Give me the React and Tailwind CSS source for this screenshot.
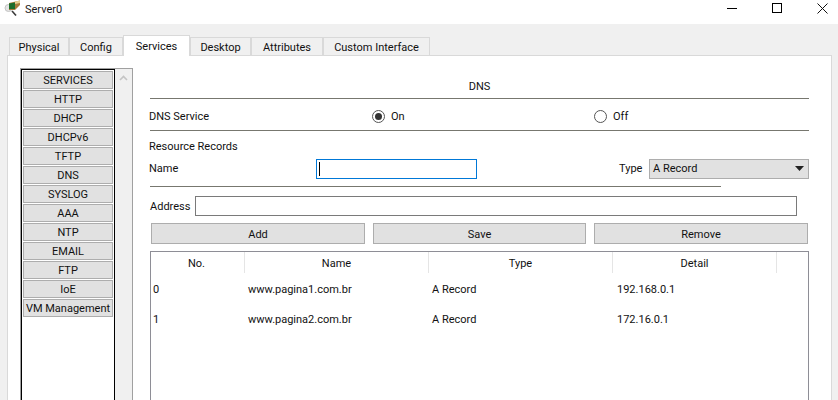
const tabs = [
  { label: 'Physical', w: 'w-[60px]' },
  { label: 'Config', w: 'w-[54px]' },
  { label: 'Services', w: 'w-[67px]', active: true },
  { label: 'Desktop', w: 'w-[61px]' },
  { label: 'Attributes', w: 'w-[72px]' },
  { label: 'Custom Interface', w: 'w-[107px]' },
]

const services = ['SERVICES', 'HTTP', 'DHCP', 'DHCPv6', 'TFTP', 'DNS', 'SYSLOG', 'AAA', 'NTP', 'EMAIL', 'FTP', 'IoE', 'VM Management']

const records = [
  { no: '0', name: 'www.pagina1.com.br', type: 'A Record', detail: '192.168.0.1' },
  { no: '1', name: 'www.pagina2.com.br', type: 'A Record', detail: '172.16.0.1' },
]

const TitleBar = () => (
  <div className="h-6 bg-white flex items-center justify-between pr-[10px]">
    <div className="flex items-center pl-[4px] gap-[5px]">
      <svg width="16" height="16" viewBox="0 0 16 16" className="relative top-[-4px]">
        <circle cx="4.5" cy="8" r="3.5" fill="#e4e4e4" stroke="#c4c4c4" />
        <path d="M8 11l4 4.5" stroke="#3a3a3a" strokeWidth="1.6" />
        <path d="M5 3l11-2.5V5l-5 5H5z" fill="#a97c3a" />
        <path d="M5 3.5l6-1V9H5z" fill="#1d6e2a" />
        <path d="M11 1.5l5-1V3l-5 1z" fill="#e6cf8e" />
      </svg>
      <span className="text-[11px] text-[#1a1a1a] relative top-[-2px]">Server0</span>
    </div>
    <div className="flex items-center gap-[35px]">
      <div className="w-[10px] h-px bg-black relative top-[-4px]" />
      <div className="w-[10px] h-[10px] border border-black relative top-[-4px]" />
      <svg width="11" height="11" viewBox="0 0 11 11" className="relative top-[-4px]">
        <path d="M.5.5l10 10M10.5.5l-10 10" stroke="#111" />
      </svg>
    </div>
  </div>
)

const Tabs = () => (
  <div className="flex h-[31px] pl-[9px] items-end">
    {tabs.map((t) =>
      t.active ? (
        <div key={t.label} className={`${t.w} h-[21px] pt-[2px] bg-white border border-b-0 border-[#d9d9d9] flex items-center justify-center relative top-px z-10`}>
          {t.label}
        </div>
      ) : (
        <div key={t.label} className={`${t.w} h-[18px] pt-[3px] bg-[#f0f0f0] border border-b-0 border-[#d9d9d9] flex items-center justify-center`}>
          {t.label}
        </div>
      )
    )}
  </div>
)

const ServiceList = () => (
  <div className="w-[113px] h-[340px] ml-[12px] mt-[12px] shrink-0 flex border border-[#a0a0a0] border-b-0">
    <div className="w-[94px] border border-black border-b-0 pl-px pt-[1px] flex flex-col gap-px">
      {services.map((s) => (
        <div key={s} className="w-[90px] h-[18px] pt-[2px] bg-[#e1e1e1] border border-[#adadad] flex items-center justify-center whitespace-nowrap">
          {s}
        </div>
      ))}
    </div>
    <div className="flex-1 bg-[#f0f0f0] flex justify-center pt-[6px]">
      <svg width="9" height="6" viewBox="0 0 9 6">
        <path d="M1 5l3.5-3.5L8 5" fill="none" stroke="#c4c4c4" strokeWidth="1.6" />
      </svg>
    </div>
  </div>
)

const Radio = ({ on, label }) => (
  <div className="flex items-center gap-[6px]">
    <div className="w-[13px] h-[13px] rounded-full border border-[#555] flex items-center justify-center">
      {on && <div className="w-[7px] h-[7px] rounded-full bg-[#333]" />}
    </div>
    <span className="pt-[2px]">{label}</span>
  </div>
)

const ActionButton = ({ label, w }) => (
  <div className={`${w} h-[21px] pt-[3px] bg-[#e1e1e1] border border-[#adadad] flex items-center justify-center`}>{label}</div>
)

const DnsPanel = () => (
  <div className="w-[659px] ml-[17px] shrink-0">
    <div className="h-[43px] pt-[23px] text-center leading-[15px] border-b border-[#77776f]">DNS</div>
    <div className="h-[32px] pt-[3px] flex items-center border-b border-[#77776f]">
      <span className="w-[223px] -ml-px pt-[2px]">DNS Service</span>
      <div className="w-[222px]"><Radio on label="On" /></div>
      <Radio label="Off" />
    </div>
    <div className="h-[27px] pt-[8px] -ml-px leading-[15px]">Resource Records</div>
    <div className="h-[21px] flex items-center">
      <span className="w-[167px] -ml-px pt-[2px]">Name</span>
      <div className="w-[161px] h-[20px] border border-[#0078d7] flex items-center pl-[2px]">
        <div className="w-px h-[14px] bg-black" />
      </div>
      <span className="ml-[142px] w-[30px] pt-[2px]">Type</span>
      <div className="w-[160px] h-[20px] bg-[#e1e1e1] border border-[#adadad] flex items-center justify-between pl-[3px] pr-[4px]">
        <span className="pt-[2px]">A Record</span>
        <svg width="9" height="5" viewBox="0 0 9 5"><path d="M0 0h9L4.5 5z" fill="#222" /></svg>
      </div>
    </div>
    <div className="w-[571px] h-px bg-[#77776f] mt-[7px]" />
    <div className="flex items-center h-[20px] mt-[9px]">
      <span className="w-[45px] pt-[2px]">Address</span>
      <div className="w-[602px] h-[20px] border border-[#7a7a7a] bg-white" />
    </div>
    <div className="flex gap-2 mt-[7px] ml-px">
      <ActionButton label="Add" w="w-[214px]" />
      <ActionButton label="Save" w="w-[213px]" />
      <ActionButton label="Remove" w="w-[214px]" />
    </div>
    <div className="h-[160px] mt-[7px] border border-[#8e8e96] border-b-0">
      <div className="h-[21px] flex">
        <div className="w-[94px] border-r border-[#e5e5e5] flex items-center justify-center pr-[2px] pt-[3px]">No.</div>
        <div className="w-[184px] border-r border-[#e5e5e5] flex items-center justify-center pt-[3px]">Name</div>
        <div className="w-[184px] border-r border-[#e5e5e5] flex items-center justify-center pt-[3px]">Type</div>
        <div className="w-[164px] border-r border-[#e5e5e5] flex items-center justify-center pt-[3px]">Detail</div>
      </div>
      <div className="pt-[2px]">
        {records.map((r) => (
          <div key={r.no} className="h-[30px] flex items-center">
            <span className="w-[97px] pl-[2px]">{r.no}</span>
            <span className="w-[184px]">{r.name}</span>
            <span className="w-[185px]">{r.type}</span>
            <span>{r.detail}</span>
          </div>
        ))}
      </div>
    </div>
  </div>
)

const App = () => {
  return (
    <div className="w-[838px] h-[400px] overflow-hidden bg-[#f0f0f0] text-[11px] text-[#111] font-['Roboto','Open_Sans',sans-serif]">
      <TitleBar />
      <Tabs />
      <div className="w-[825px] h-[345px] ml-[7px] bg-white border border-b-0 border-[#d9d9d9] flex">
        <ServiceList />
        <DnsPanel />
      </div>
    </div>
  )
}

export default App
